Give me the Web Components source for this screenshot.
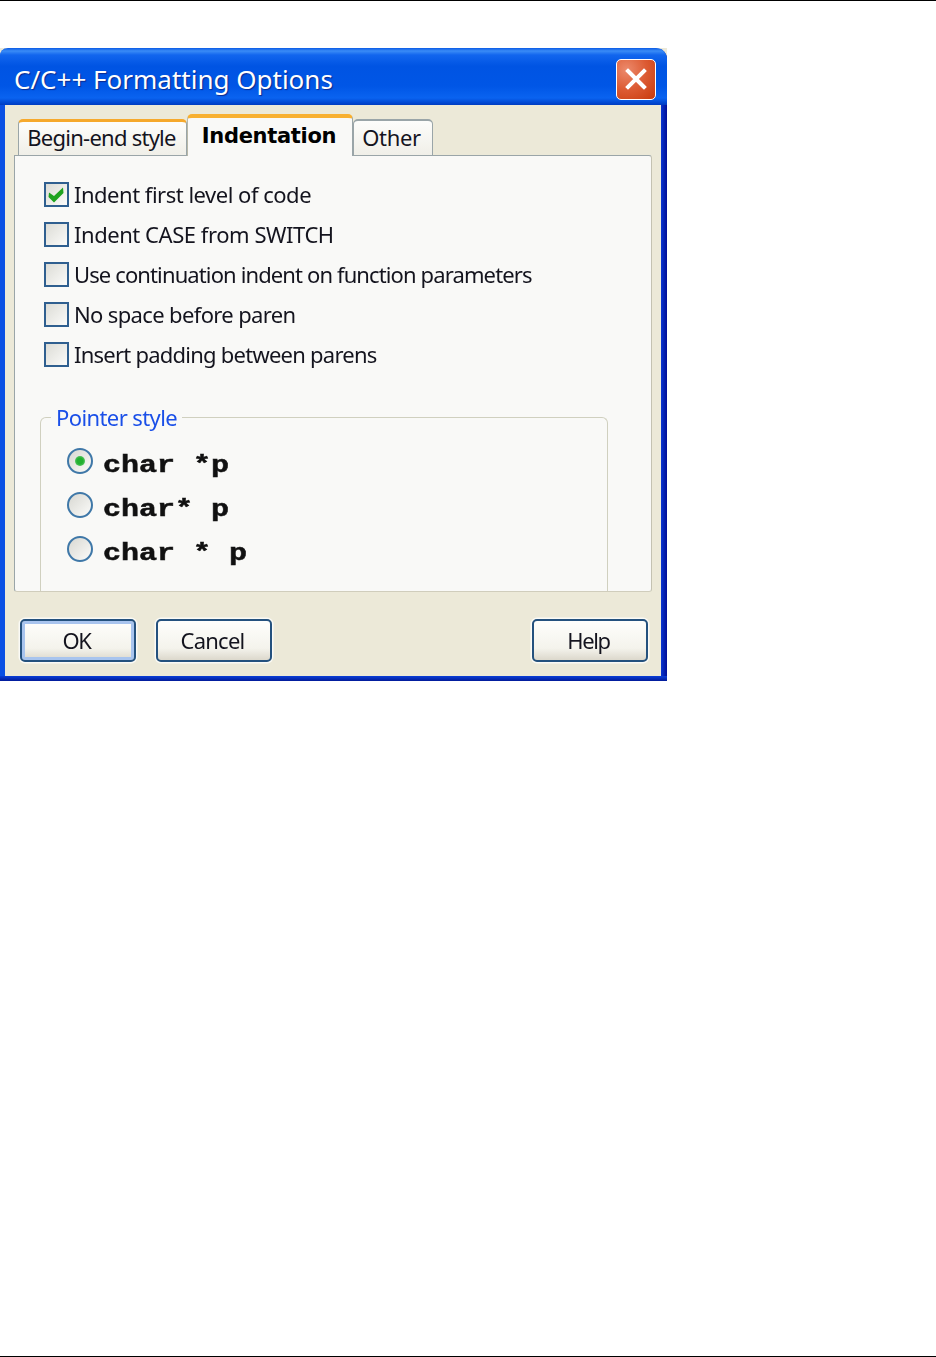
<!DOCTYPE html>
<html>
<head>
<meta charset="utf-8">
<title>C/C++ Formatting Options</title>
<style>
html, body { margin: 0; padding: 0; background: #fff; }
body { height: 1357px; box-sizing: border-box; border-top: 1px solid #000; border-bottom: 1px solid #000; padding-top: 47px; font-family: "Noto Sans", "DejaVu Sans", sans-serif; }
</style>
</head>
<body>
<xp-dialog heading="C/C++ Formatting Options">
  <xp-tabs slot="tabs">
    <xp-tab style="letter-spacing:-0.75px">Begin-end style</xp-tab>
    <xp-tab active>Indentation</xp-tab>
    <xp-tab plain>Other</xp-tab>
  </xp-tabs>
  <xp-check checked style="letter-spacing:-0.49px">Indent first level of code</xp-check>
  <xp-check style="letter-spacing:-0.45px">Indent CASE from SWITCH</xp-check>
  <xp-check style="letter-spacing:-0.88px">Use continuation indent on function parameters</xp-check>
  <xp-check style="letter-spacing:-0.64px">No space before paren</xp-check>
  <xp-check style="letter-spacing:-0.76px">Insert padding between parens</xp-check>
  <xp-group legend="Pointer style">
    <xp-radio checked>char *p</xp-radio>
    <xp-radio>char* p</xp-radio>
    <xp-radio>char * p</xp-radio>
  </xp-group>
  <xp-button slot="left" default style="letter-spacing:-1.4px">OK</xp-button>
  <xp-button slot="left" style="letter-spacing:-0.75px">Cancel</xp-button>
  <xp-button slot="right" style="letter-spacing:-1.4px">Help</xp-button>
</xp-dialog>

<script>
class XpDialog extends HTMLElement {
    constructor() {
        super();
        this.shadowDOM = this.attachShadow({mode: 'open'});
    }

    connectedCallback() {
        this.shadowDOM.innerHTML = `
        <style>
        :host {
            display: block;
            width: 667px;
            height: 633px;
            background: #ece9d8;
            color: #14141e;
            font-size: 22px;
        }
        .frame {
            height: 100%;
            box-sizing: border-box;
            display: flex;
            flex-direction: column;
            border-radius: 8px 11px 0 0;
            overflow: hidden;
            background: linear-gradient(90deg, #0a50e4 0, #0a50e4 5px, #ece9d8 5px, #ece9d8 661px, #0836d0 661px, #000f96 100%);
            filter: blur(0.55px);
        }
        .title {
            height: 57px;
            flex: none;
            box-sizing: border-box;
            display: flex;
            align-items: center;
            justify-content: space-between;
            padding: 5px 11px 0 14px;
            background: linear-gradient(180deg, #0a5ae6 0, #3a8cf6 3px, #1266ee 7px, #0054e3 18px, #0056e6 38px, #0a63f0 50px, #0046d0 55px, #003cc0 57px);
            color: #fff;
            font-size: 26px;
            text-shadow: 1px 1px 1px #0a2a90;
        }
        .close {
            width: 40px;
            height: 41px;
            box-sizing: border-box;
            border: 1.5px solid #fff;
            border-radius: 5px;
            background: radial-gradient(circle at 25% 25%, #ec8a6c, #dc5a32 50%, #c83a0c 100%);
            display: flex;
            align-items: center;
            justify-content: center;
        }
        .body {
            flex: 1;
            display: flex;
            flex-direction: column;
            padding: 9px 9px 14px 9px;
            margin: 0 6px 0 5px;
        }
        .panel {
            height: 437px;
            box-sizing: border-box;
            display: flex;
            flex-direction: column;
            padding: 18.5px 43px 0 25px;
            background: #f9f9f7;
            border: 1.5px solid #a9aaa2;
            border-top-color: #9aa5a8;
            border-left-color: #9aa5a8;
            border-bottom-color: #d0cdbc;
            border-right-color: #c4c2b2;
            border-radius: 0 3px 3px 3px;
        }
        .foot {
            display: flex;
            justify-content: space-between;
            margin-top: 27px;
            padding-left: 6px;
            padding-right: 4px;
        }
        .foot > div { display: flex; gap: 20px; }
        .edge {
            height: 6px;
            flex: none;
            background: linear-gradient(180deg, #0a3fd8, #00138c);
        }
        </style>
        <div class="frame">
            <div class="title">
                <span>${this.getAttribute('heading')}</span>
                <div class="close">
                    <svg width="26" height="26" viewBox="0 0 26 26"><path d="M5 5 L21 21 M21 5 L5 21" stroke="#fff" stroke-width="4" stroke-linecap="square"/></svg>
                </div>
            </div>
            <div class="body">
                <slot name="tabs"></slot>
                <div class="panel"><slot></slot></div>
                <div class="foot">
                    <div><slot name="left"></slot></div>
                    <div><slot name="right"></slot></div>
                </div>
            </div>
            <div class="edge"></div>
        </div>
        `;
    }
}

class XpTabs extends HTMLElement {
    constructor() {
        super();
        this.shadowDOM = this.attachShadow({mode: 'open'});
        this.shadowDOM.innerHTML = `
        <style>
        :host {
            display: flex;
            align-items: flex-end;
            height: 42px;
            padding-left: 4px;
            margin-bottom: -1px;
            position: relative;
            z-index: 1;
        }
        </style>
        <slot></slot>
        `;
    }
}

class XpTab extends HTMLElement {
    constructor() {
        super();
        this.shadowDOM = this.attachShadow({mode: 'open'});
        this.shadowDOM.innerHTML = `
        <style>
        :host {
            display: block;
            box-sizing: border-box;
            height: 37px;
            width: 169px;
            padding-right: 2px;
            text-align: center;
            line-height: 30px;
            font-size: 22px;
            white-space: nowrap;
            background: linear-gradient(180deg, #fdfdfb, #f0efe8);
            border: 1.5px solid #9aa5a8;
            border-top: 3px solid #f6a92c;
            border-radius: 5px 5px 0 0;
        }
        :host([active]) {
            width: 166px;
            height: 42px;
            line-height: 37px;
            background: #f9f9f7;
            border-top: 4px solid #f8b030;
            border-left-color: #b8b8a8;
            border-right-color: #9aa5a8;
            border-bottom: 0;
            font-weight: 700;
            font-family: "DejaVu Sans", sans-serif;
            letter-spacing: -0.3px;
            font-size: 21px;
            color: #000;
        }
        :host([plain]) {
            width: 80px;
            line-height: 33px;
            letter-spacing: -0.3px;
            padding-right: 3px;
            border-top: 2px solid #9aa5a8;
        }
        </style>
        <slot></slot>
        `;
    }
}

class XpCheck extends HTMLElement {
    constructor() {
        super();
        this.shadowDOM = this.attachShadow({mode: 'open'});
    }

    connectedCallback() {
        const mark = this.hasAttribute('checked')
            ? '<svg width="21" height="21" viewBox="0 0 21 21"><path d="M3 8.5 L8 12 L17 3.5 L17.5 9 L8 18.5 L2.5 13 Z" fill="#1fa31f"/></svg>'
            : '';
        this.shadowDOM.innerHTML = `
        <style>
        :host {
            display: flex;
            align-items: center;
            height: 40px;
            margin-left: 3.5px;
            font-size: 22px;
            white-space: nowrap;
        }
        .box {
            width: 25px;
            height: 25px;
            box-sizing: border-box;
            flex: none;
            margin-right: 5.5px;
            border: 2px solid #2f5f8f;
            background: linear-gradient(135deg, #dcdcd6, #fbfbf9);
            display: flex;
            align-items: center;
            justify-content: center;
        }
        .label { padding-bottom: 1px; }
        </style>
        <span class="box">${mark}</span><span class="label"><slot></slot></span>
        `;
    }
}

class XpGroup extends HTMLElement {
    constructor() {
        super();
        this.shadowDOM = this.attachShadow({mode: 'open'});
    }

    connectedCallback() {
        this.shadowDOM.innerHTML = `
        <style>
        :host {
            display: block;
            flex: 1;
            margin: 42.5px 0 0 0;
            box-sizing: border-box;
            padding: 20.5px 0 0 26px;
            border: 1.5px solid #d0d0bf;
            border-bottom: 0;
            border-radius: 6px 6px 0 0;
            position: relative;
        }
        .legend {
            position: absolute;
            top: -15px;
            left: 10px;
            padding: 0 5px;
            background: #f9f9f7;
            color: #1a4fe8;
            font-size: 22px;
            letter-spacing: -0.6px;
            line-height: 28px;
        }
        </style>
        <div class="legend">${this.getAttribute('legend')}</div>
        <slot></slot>
        `;
    }
}

class XpRadio extends HTMLElement {
    constructor() {
        super();
        this.shadowDOM = this.attachShadow({mode: 'open'});
        this.shadowDOM.innerHTML = `
        <style>
        :host {
            display: flex;
            align-items: center;
            height: 44px;
        }
        .dot {
            width: 26px;
            height: 26px;
            box-sizing: border-box;
            flex: none;
            margin-right: 9.5px;
            border: 2px solid #3f78a8;
            border-radius: 50%;
            background: linear-gradient(135deg, #d8d8d2, #fbfbf9);
            display: flex;
            align-items: center;
            justify-content: center;
        }
        :host([checked]) .dot::after {
            content: "";
            width: 10px;
            height: 10px;
            border-radius: 50%;
            background: radial-gradient(circle, #22b030 40%, #7cd486 100%);
        }
        .label {
            padding-top: 10px;
            font-family: "Liberation Mono", monospace;
            font-weight: 700;
            font-size: 24px;
            white-space: pre;
            color: #111;
            -webkit-text-stroke: 0.5px #111;
            transform: scaleX(1.25);
            transform-origin: left center;
        }
        </style>
        <span class="dot"></span><span class="label"><slot></slot></span>
        `;
    }
}

class XpButton extends HTMLElement {
    constructor() {
        super();
        this.shadowDOM = this.attachShadow({mode: 'open'});
        this.shadowDOM.innerHTML = `
        <style>
        :host {
            display: block;
            width: 116px;
            height: 43px;
            box-sizing: border-box;
            padding-right: 3px;
            text-align: center;
            line-height: 39px;
            font-size: 22px;
            border: 2px solid #24517e;
            border-radius: 5px;
            background: linear-gradient(180deg, #fefefc, #f4f3ec 70%, #dcd8cc);
            box-shadow: 0 0 0 1.5px #fafaf6;
            color: #14141e;
        }
        :host([default]) {
            box-shadow: 0 0 0 1.5px #fafaf6, inset 0 0 0 3px #a8c4ee;
        }
        </style>
        <slot></slot>
        `;
    }
}

customElements.define('xp-dialog', XpDialog);
customElements.define('xp-tabs', XpTabs);
customElements.define('xp-tab', XpTab);
customElements.define('xp-check', XpCheck);
customElements.define('xp-group', XpGroup);
customElements.define('xp-radio', XpRadio);
customElements.define('xp-button', XpButton);
</script>
</body>
</html>
